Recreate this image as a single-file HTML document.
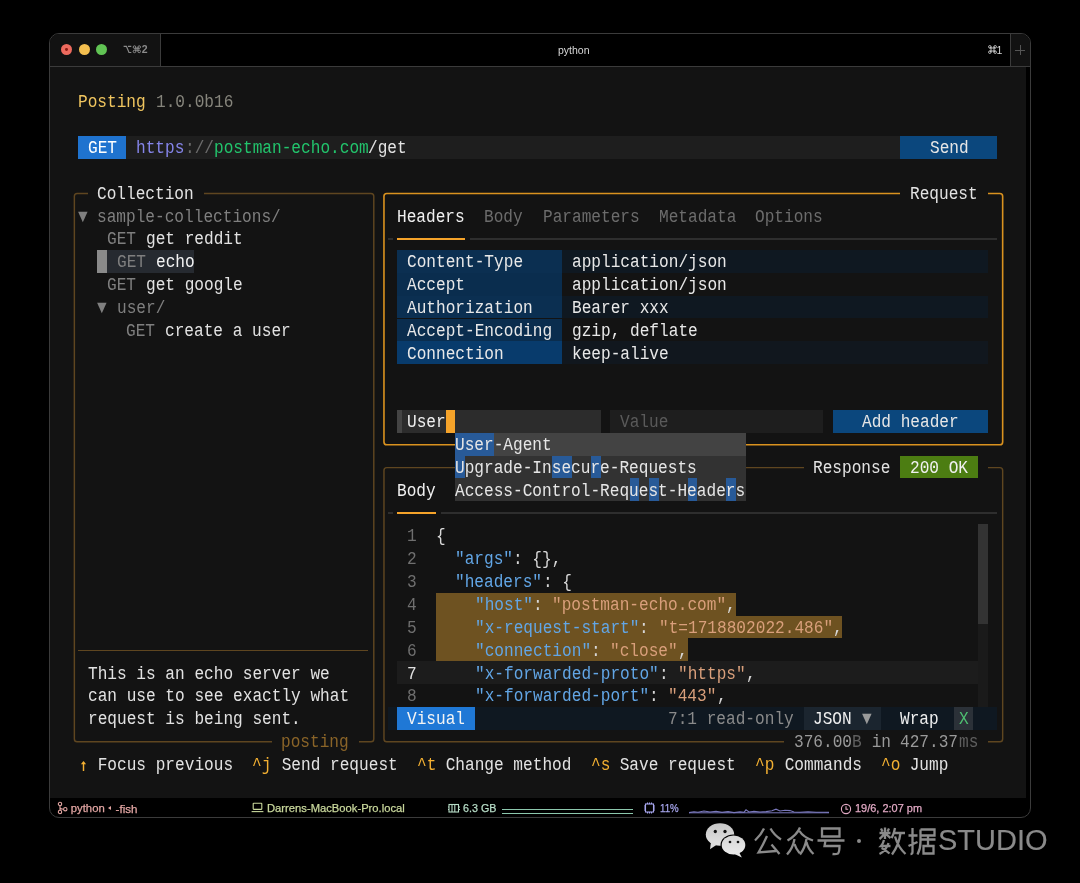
<!DOCTYPE html><html><head><meta charset="utf-8"><style>
html,body{margin:0;padding:0;background:#000;width:1080px;height:883px;overflow:hidden;position:relative}
.t{position:absolute;font-family:"Liberation Mono",monospace;font-size:18.600px;line-height:22.85px;height:22.85px;white-space:pre;transform:scaleX(0.8668);transform-origin:0 0;}
.s{position:absolute;font-family:"Liberation Sans",sans-serif;white-space:pre;}
</style></head><body><div id="root" style="position:absolute;left:0;top:0;width:1080px;height:883px;overflow:hidden;will-change:transform">
<div style="position:absolute;left:49px;top:33px;width:980px;height:783px;border:1px solid #3b3b3b;border-radius:10px;background:#000;overflow:hidden">
</div>
<div style="position:absolute;left:50.00px;top:34.00px;width:110.00px;height:32.00px;background:#121212;border-top-left-radius:9px;"></div>
<div style="position:absolute;left:160.00px;top:34.00px;width:1.00px;height:32.00px;background:#3b3b3b;"></div>
<div style="position:absolute;left:50.00px;top:66.00px;width:980.00px;height:1.00px;background:#3b3b3b;"></div>
<div style="position:absolute;left:1010.00px;top:34.00px;width:1.00px;height:32.00px;background:#3b3b3b;"></div>
<div style="position:absolute;left:1011.00px;top:34.00px;width:19.00px;height:32.00px;background:#121212;border-top-right-radius:9px;"></div>
<div style="position:absolute;left:1015.00px;top:49.50px;width:10.00px;height:1.00px;background:#555;"></div>
<div style="position:absolute;left:1019.50px;top:45.00px;width:1.00px;height:10.00px;background:#555;"></div>
<div style="position:absolute;left:61px;top:44.2px;width:11px;height:11px;border-radius:50%;background:#ed6a5e"></div>
<div style="position:absolute;left:65.1px;top:48.3px;width:2.8px;height:2.8px;border-radius:50%;background:#8c1a12"></div>
<div style="position:absolute;left:78.6px;top:44.2px;width:11px;height:11px;border-radius:50%;background:#f4bf4f"></div>
<div style="position:absolute;left:96.2px;top:44.2px;width:11px;height:11px;border-radius:50%;background:#61c454"></div>
<svg style="position:absolute;left:123px;top:45px" width="26" height="10" viewBox="0 0 26 10"><g fill="none" stroke="#8a8a8a" stroke-width="1.2"><path d="M0.6 1.3H3.4L6.0 7.5H8.3M5.0 1.3H8.3"/><path d="M12.9 2.2V6.3M14.9 2.2V6.3M11.6 3.3H16.2M11.6 5.2H16.2" stroke-width="1.0"/><circle cx="11.5" cy="2.1" r="1.3" stroke-width="1.0"/><circle cx="16.2" cy="2.1" r="1.3" stroke-width="1.0"/><circle cx="11.5" cy="6.4" r="1.3" stroke-width="1.0"/><circle cx="16.2" cy="6.4" r="1.3" stroke-width="1.0"/></g></svg>
<div class="s" style="left:141.8px;top:43.2px;font-size:10.5px;color:#8a8a8a;font-weight:bold">2</div>
<div class="s" style="left:558px;top:43.5px;font-size:10.5px;color:#d8d8d8;">python</div>
<svg style="position:absolute;left:987.5px;top:45px" width="9" height="9" viewBox="0 0 9 9"><g fill="none" stroke="#d8d8d8" stroke-width="0.85"><path d="M3 1.6V7.4M6 1.6V7.4M1.6 3H7.4M1.6 6H7.4"/><circle cx="1.8" cy="1.8" r="1.25"/><circle cx="7.2" cy="1.8" r="1.25"/><circle cx="1.8" cy="7.2" r="1.25"/><circle cx="7.2" cy="7.2" r="1.25"/></g></svg>
<div class="s" style="left:996.5px;top:43.5px;font-size:10.5px;color:#d8d8d8;">1</div>
<div style="position:absolute;left:50.00px;top:67.00px;width:976.00px;height:731.00px;background:#131313;"></div>
<div class="t" style="left:78.10px;top:92.30px;color:#f0c55f;">Posting</div>
<div class="t" style="left:145.82px;top:92.30px;color:#e2e2e2;"> </div>
<div class="t" style="left:155.50px;top:92.30px;color:#86857c;">1.0.0b16</div>
<div style="position:absolute;left:78.10px;top:135.70px;width:48.38px;height:22.85px;background:#1f73cf;"></div>
<div class="t" style="left:87.77px;top:138.00px;color:#ffffff;">GET</div>
<div style="position:absolute;left:126.47px;top:135.70px;width:774.00px;height:22.85px;background:#1e1e1e;"></div>
<div class="t" style="left:136.15px;top:138.00px;color:#8585ea;">https</div>
<div class="t" style="left:184.53px;top:138.00px;color:#6c6c6c;">://</div>
<div class="t" style="left:213.55px;top:138.00px;color:#22c46c;">postman-echo.com</div>
<div class="t" style="left:368.35px;top:138.00px;color:#e2e2e2;">/get</div>
<div style="position:absolute;left:900.48px;top:135.70px;width:96.75px;height:22.85px;background:#0b477d;"></div>
<div class="t" style="left:929.50px;top:138.00px;color:#e6e6e6;">Send</div>
<svg style="position:absolute;left:0;top:0" width="1080" height="883"><rect x="74.36" y="193.43" width="299.43" height="548.40" rx="2.8" fill="none" stroke="#5f4620" stroke-width="1.45"/></svg>
<div style="position:absolute;left:87.77px;top:181.40px;width:116.10px;height:22.85px;background:#131313;"></div>
<div class="t" style="left:97.45px;top:183.70px;color:#e2e2e2;">Collection</div>
<div class="t" style="left:78.10px;top:206.55px;color:#7f7f7f;">▼</div>
<div class="t" style="left:87.77px;top:206.55px;color:#7f7f7f;"> </div>
<div class="t" style="left:97.45px;top:206.55px;color:#7f7f7f;">sample-collections/</div>
<div class="t" style="left:107.12px;top:229.40px;color:#7f7f7f;">GET</div>
<div class="t" style="left:136.15px;top:229.40px;color:#7f7f7f;"> </div>
<div class="t" style="left:145.82px;top:229.40px;color:#e2e2e2;">get reddit</div>
<div style="position:absolute;left:97.45px;top:249.95px;width:9.68px;height:22.85px;background:#8a8a8a;"></div>
<div style="position:absolute;left:107.12px;top:249.95px;width:87.08px;height:22.85px;background:#262a30;"></div>
<div class="t" style="left:116.80px;top:252.25px;color:#7f7f7f;">GET</div>
<div class="t" style="left:145.82px;top:252.25px;color:#7f7f7f;"> </div>
<div class="t" style="left:155.50px;top:252.25px;color:#f4f4f4;">echo</div>
<div class="t" style="left:107.12px;top:275.10px;color:#7f7f7f;">GET</div>
<div class="t" style="left:136.15px;top:275.10px;color:#7f7f7f;"> </div>
<div class="t" style="left:145.82px;top:275.10px;color:#e2e2e2;">get google</div>
<div class="t" style="left:97.45px;top:297.95px;color:#7f7f7f;">▼</div>
<div class="t" style="left:107.12px;top:297.95px;color:#7f7f7f;"> </div>
<div class="t" style="left:116.80px;top:297.95px;color:#7f7f7f;">user/</div>
<div class="t" style="left:126.47px;top:320.80px;color:#7f7f7f;">GET</div>
<div class="t" style="left:155.50px;top:320.80px;color:#7f7f7f;"> </div>
<div class="t" style="left:165.18px;top:320.80px;color:#e2e2e2;">create a user</div>
<div style="position:absolute;left:78.10px;top:649.98px;width:290.25px;height:1.50px;background:#5f4620;"></div>
<div class="t" style="left:87.77px;top:663.55px;color:#e2e2e2;">This is an echo server we</div>
<div class="t" style="left:87.77px;top:686.40px;color:#e2e2e2;">can use to see exactly what</div>
<div class="t" style="left:87.77px;top:709.25px;color:#e2e2e2;">request is being sent.</div>
<div style="position:absolute;left:271.60px;top:729.80px;width:87.08px;height:22.85px;background:#131313;"></div>
<div class="t" style="left:281.27px;top:732.10px;color:#8a6428;">posting</div>
<svg style="position:absolute;left:0;top:0" width="1080" height="883"><rect x="383.96" y="193.43" width="618.70" height="251.35" rx="2.8" fill="none" stroke="#da921f" stroke-width="1.6"/></svg>
<div style="position:absolute;left:900.48px;top:181.40px;width:87.08px;height:22.85px;background:#131313;"></div>
<div class="t" style="left:910.15px;top:183.70px;color:#e2e2e2;">Request</div>
<div class="t" style="left:397.38px;top:206.55px;color:#f0f0f0;">Headers</div>
<div class="t" style="left:484.45px;top:206.55px;color:#6c6c6c;">Body</div>
<div class="t" style="left:542.50px;top:206.55px;color:#6c6c6c;">Parameters</div>
<div class="t" style="left:658.60px;top:206.55px;color:#6c6c6c;">Metadata</div>
<div class="t" style="left:755.35px;top:206.55px;color:#6c6c6c;">Options</div>
<div style="position:absolute;left:387.70px;top:238.23px;width:4.84px;height:1.80px;background:#2e2e2e;"></div>
<div style="position:absolute;left:397.38px;top:238.03px;width:67.73px;height:2.20px;background:#f5a32a;"></div>
<div style="position:absolute;left:469.94px;top:238.23px;width:527.29px;height:1.80px;background:#2e2e2e;"></div>
<div style="position:absolute;left:397.38px;top:249.95px;width:164.48px;height:22.85px;background:#0b2f51;"></div>
<div style="position:absolute;left:561.85px;top:249.95px;width:425.70px;height:22.85px;background:#0f1821;"></div>
<div class="t" style="left:407.05px;top:252.25px;color:#e8e8e8;">Content-Type</div>
<div class="t" style="left:571.52px;top:252.25px;color:#e8e8e8;">application/json</div>
<div style="position:absolute;left:397.38px;top:272.80px;width:164.48px;height:22.85px;background:#0a2d4e;"></div>
<div style="position:absolute;left:561.85px;top:272.80px;width:425.70px;height:22.85px;background:#131313;"></div>
<div class="t" style="left:407.05px;top:275.10px;color:#e8e8e8;">Accept</div>
<div class="t" style="left:571.52px;top:275.10px;color:#e8e8e8;">application/json</div>
<div style="position:absolute;left:397.38px;top:295.65px;width:164.48px;height:22.85px;background:#0b2f51;"></div>
<div style="position:absolute;left:561.85px;top:295.65px;width:425.70px;height:22.85px;background:#0f1821;"></div>
<div class="t" style="left:407.05px;top:297.95px;color:#e8e8e8;">Authorization</div>
<div class="t" style="left:571.52px;top:297.95px;color:#e8e8e8;">Bearer xxx</div>
<div style="position:absolute;left:397.38px;top:318.50px;width:164.48px;height:22.85px;background:#0a2d4e;"></div>
<div style="position:absolute;left:561.85px;top:318.50px;width:425.70px;height:22.85px;background:#131313;"></div>
<div class="t" style="left:407.05px;top:320.80px;color:#e8e8e8;">Accept-Encoding</div>
<div class="t" style="left:571.52px;top:320.80px;color:#e8e8e8;">gzip, deflate</div>
<div style="position:absolute;left:397.38px;top:341.35px;width:164.48px;height:22.85px;background:#083b6c;"></div>
<div style="position:absolute;left:561.85px;top:341.35px;width:425.70px;height:22.85px;background:#11171e;"></div>
<div class="t" style="left:407.05px;top:343.65px;color:#e8e8e8;">Connection</div>
<div class="t" style="left:571.52px;top:343.65px;color:#e8e8e8;">keep-alive</div>
<div style="position:absolute;left:397.38px;top:409.90px;width:203.18px;height:22.85px;background:#2c2c2c;"></div>
<div style="position:absolute;left:397.38px;top:409.90px;width:4.84px;height:22.85px;background:#444444;"></div>
<div class="t" style="left:407.05px;top:412.20px;color:#eeeeee;">User</div>
<div style="position:absolute;left:445.75px;top:409.90px;width:9.68px;height:22.85px;background:#f5a32a;"></div>
<div style="position:absolute;left:610.23px;top:409.90px;width:212.85px;height:22.85px;background:#1e1e1e;"></div>
<div class="t" style="left:619.90px;top:412.20px;color:#5a5a5a;">Value</div>
<div style="position:absolute;left:832.75px;top:409.90px;width:154.80px;height:22.85px;background:#0b477d;"></div>
<div class="t" style="left:861.78px;top:412.20px;color:#e6e6e6;">Add header</div>
<svg style="position:absolute;left:0;top:0" width="1080" height="883"><rect x="383.96" y="467.63" width="618.70" height="274.20" rx="2.8" fill="none" stroke="#5f4620" stroke-width="1.45"/></svg>
<div style="position:absolute;left:803.73px;top:455.60px;width:183.83px;height:22.85px;background:#131313;"></div>
<div class="t" style="left:813.40px;top:457.90px;color:#e2e2e2;">Response</div>
<div style="position:absolute;left:900.48px;top:455.60px;width:77.40px;height:22.85px;background:#4c7d12;"></div>
<div class="t" style="left:910.15px;top:457.90px;color:#f0f0f0;">200 OK</div>
<div class="t" style="left:397.38px;top:480.75px;color:#f0f0f0;">Body</div>
<div style="position:absolute;left:387.70px;top:512.43px;width:4.84px;height:1.80px;background:#2e2e2e;"></div>
<div style="position:absolute;left:397.38px;top:512.23px;width:38.70px;height:2.20px;background:#f5a32a;"></div>
<div style="position:absolute;left:440.91px;top:512.43px;width:556.31px;height:1.80px;background:#2e2e2e;"></div>
<div style="position:absolute;left:397.38px;top:661.25px;width:580.50px;height:22.85px;background:#1c1c1c;"></div>
<div style="position:absolute;left:436.08px;top:592.70px;width:299.93px;height:22.85px;background:#6e5221;"></div>
<div style="position:absolute;left:436.08px;top:615.55px;width:406.35px;height:22.85px;background:#6e5221;"></div>
<div style="position:absolute;left:436.08px;top:638.40px;width:251.55px;height:22.85px;background:#6e5221;"></div>
<div class="t" style="left:407.05px;top:526.45px;color:#6f6f6f;">1</div>
<div class="t" style="left:436.08px;top:526.45px;color:#d8d8d8;">{</div>
<div class="t" style="left:407.05px;top:549.30px;color:#6f6f6f;">2</div>
<div class="t" style="left:455.43px;top:549.30px;color:#62a6e6;">&quot;args&quot;</div>
<div class="t" style="left:513.48px;top:549.30px;color:#d8d8d8;">: {},</div>
<div class="t" style="left:407.05px;top:572.15px;color:#6f6f6f;">3</div>
<div class="t" style="left:455.43px;top:572.15px;color:#62a6e6;">&quot;headers&quot;</div>
<div class="t" style="left:542.50px;top:572.15px;color:#d8d8d8;">: {</div>
<div class="t" style="left:407.05px;top:595.00px;color:#6f6f6f;">4</div>
<div class="t" style="left:474.77px;top:595.00px;color:#62a6e6;">&quot;host&quot;</div>
<div class="t" style="left:532.83px;top:595.00px;color:#d8d8d8;">: </div>
<div class="t" style="left:552.18px;top:595.00px;color:#d99f7b;">&quot;postman-echo.com&quot;</div>
<div class="t" style="left:726.33px;top:595.00px;color:#d8d8d8;">,</div>
<div class="t" style="left:407.05px;top:617.85px;color:#6f6f6f;">5</div>
<div class="t" style="left:474.77px;top:617.85px;color:#62a6e6;">&quot;x-request-start&quot;</div>
<div class="t" style="left:639.25px;top:617.85px;color:#d8d8d8;">: </div>
<div class="t" style="left:658.60px;top:617.85px;color:#d99f7b;">&quot;t=1718802022.486&quot;</div>
<div class="t" style="left:832.75px;top:617.85px;color:#d8d8d8;">,</div>
<div class="t" style="left:407.05px;top:640.70px;color:#6f6f6f;">6</div>
<div class="t" style="left:474.77px;top:640.70px;color:#62a6e6;">&quot;connection&quot;</div>
<div class="t" style="left:590.88px;top:640.70px;color:#d8d8d8;">: </div>
<div class="t" style="left:610.23px;top:640.70px;color:#d99f7b;">&quot;close&quot;</div>
<div class="t" style="left:677.95px;top:640.70px;color:#d8d8d8;">,</div>
<div class="t" style="left:407.05px;top:663.55px;color:#e0e0e0;">7</div>
<div class="t" style="left:474.77px;top:663.55px;color:#62a6e6;">&quot;x-forwarded-proto&quot;</div>
<div class="t" style="left:658.60px;top:663.55px;color:#d8d8d8;">: </div>
<div class="t" style="left:677.95px;top:663.55px;color:#d99f7b;">&quot;https&quot;</div>
<div class="t" style="left:745.68px;top:663.55px;color:#d8d8d8;">,</div>
<div class="t" style="left:407.05px;top:686.40px;color:#6f6f6f;">8</div>
<div class="t" style="left:474.77px;top:686.40px;color:#62a6e6;">&quot;x-forwarded-port&quot;</div>
<div class="t" style="left:648.93px;top:686.40px;color:#d8d8d8;">: </div>
<div class="t" style="left:668.28px;top:686.40px;color:#d99f7b;">&quot;443&quot;</div>
<div class="t" style="left:716.65px;top:686.40px;color:#d8d8d8;">,</div>
<div style="position:absolute;left:977.88px;top:524.15px;width:9.68px;height:182.80px;background:#1a1a1a;"></div>
<div style="position:absolute;left:977.88px;top:524.15px;width:9.68px;height:100.00px;background:#333333;"></div>
<div style="position:absolute;left:387.70px;top:706.95px;width:609.53px;height:22.85px;background:#0f1821;"></div>
<div style="position:absolute;left:397.38px;top:706.95px;width:77.40px;height:22.85px;background:#1f78d6;"></div>
<div class="t" style="left:407.05px;top:709.25px;color:#f4f4f4;">Visual</div>
<div class="t" style="left:668.28px;top:709.25px;color:#8a8a8a;">7:1 read-only</div>
<div style="position:absolute;left:803.73px;top:706.95px;width:77.40px;height:22.85px;background:#1b252f;"></div>
<div class="t" style="left:813.40px;top:709.25px;color:#eeeeee;">JSON</div>
<div class="t" style="left:861.78px;top:709.25px;color:#9a9a9a;">▼</div>
<div class="t" style="left:900.48px;top:709.25px;color:#eeeeee;">Wrap</div>
<div style="position:absolute;left:953.69px;top:706.95px;width:19.35px;height:22.85px;background:#2b3138;"></div>
<div class="t" style="left:958.53px;top:709.25px;color:#4ebf71;">X</div>
<div style="position:absolute;left:784.38px;top:729.80px;width:203.18px;height:22.85px;background:#131313;"></div>
<div class="t" style="left:794.05px;top:732.10px;color:#9a9a9a;">376.00</div>
<div class="t" style="left:852.10px;top:732.10px;color:#5f5f5f;">B</div>
<div class="t" style="left:861.78px;top:732.10px;color:#9a9a9a;"> in </div>
<div class="t" style="left:900.48px;top:732.10px;color:#9a9a9a;">427.37</div>
<div class="t" style="left:958.53px;top:732.10px;color:#5f5f5f;">ms</div>
<div style="position:absolute;left:455.43px;top:432.75px;width:290.25px;height:22.85px;background:#434343;"></div>
<div style="position:absolute;left:455.43px;top:455.60px;width:290.25px;height:45.70px;background:#323232;"></div>
<div style="position:absolute;left:455.43px;top:432.75px;width:9.68px;height:22.85px;background:#285a98;"></div>
<div style="position:absolute;left:465.10px;top:432.75px;width:9.68px;height:22.85px;background:#285a98;"></div>
<div style="position:absolute;left:474.77px;top:432.75px;width:9.68px;height:22.85px;background:#285a98;"></div>
<div style="position:absolute;left:484.45px;top:432.75px;width:9.68px;height:22.85px;background:#285a98;"></div>
<div class="t" style="left:455.43px;top:435.05px;color:#e6e6e6;">User-Agent</div>
<div style="position:absolute;left:455.43px;top:455.60px;width:9.68px;height:22.85px;background:#285a98;"></div>
<div style="position:absolute;left:552.18px;top:455.60px;width:9.68px;height:22.85px;background:#285a98;"></div>
<div style="position:absolute;left:561.85px;top:455.60px;width:9.68px;height:22.85px;background:#285a98;"></div>
<div style="position:absolute;left:590.88px;top:455.60px;width:9.68px;height:22.85px;background:#285a98;"></div>
<div class="t" style="left:455.43px;top:457.90px;color:#e6e6e6;">Upgrade-Insecure-Requests</div>
<div style="position:absolute;left:629.58px;top:478.45px;width:9.68px;height:22.85px;background:#285a98;"></div>
<div style="position:absolute;left:648.93px;top:478.45px;width:9.68px;height:22.85px;background:#285a98;"></div>
<div style="position:absolute;left:687.63px;top:478.45px;width:9.68px;height:22.85px;background:#285a98;"></div>
<div style="position:absolute;left:726.33px;top:478.45px;width:9.68px;height:22.85px;background:#285a98;"></div>
<div class="t" style="left:455.43px;top:480.75px;color:#e6e6e6;">Access-Control-Request-Headers</div>
<div class="t" style="left:87.77px;top:754.95px;color:#e2e2e2;"> Focus previous  </div>
<div class="t" style="left:252.25px;top:754.95px;color:#f3b032;">^j</div>
<div class="t" style="left:271.60px;top:754.95px;color:#e2e2e2;"> Send request  </div>
<div class="t" style="left:416.73px;top:754.95px;color:#f3b032;">^t</div>
<div class="t" style="left:436.08px;top:754.95px;color:#e2e2e2;"> Change method  </div>
<div class="t" style="left:590.88px;top:754.95px;color:#f3b032;">^s</div>
<div class="t" style="left:610.23px;top:754.95px;color:#e2e2e2;"> Save request  </div>
<div class="t" style="left:755.35px;top:754.95px;color:#f3b032;">^p</div>
<div class="t" style="left:774.70px;top:754.95px;color:#e2e2e2;"> Commands  </div>
<div class="t" style="left:881.13px;top:754.95px;color:#f3b032;">^o</div>
<div class="t" style="left:900.48px;top:754.95px;color:#e2e2e2;"> Jump</div>
<svg style="position:absolute;left:78px;top:758px" width="12" height="14" viewBox="0 0 12 14"><path d="M5.5 4.5V13" stroke="#f3b032" stroke-width="1.45"/><path d="M2.9 6.3L5.5 2.9L8.1 6.3Z" fill="#f3b032"/></svg>
<div class="s" style="left:70.8px;top:802.0px;font-size:11.3px;color:#e3a6a3;transform:scaleX(1.0);transform-origin:0 0;-webkit-text-stroke:0.25px #e3a6a3">python</div>
<div style="position:absolute;left:108.4px;top:805.9px;width:0;height:0;border-top:2.2px solid transparent;border-bottom:2.2px solid transparent;border-right:3.8px solid #e3a6a3"></div>
<div class="s" style="left:115.6px;top:802.0px;font-size:11.6px;color:#e3a6a3;transform:scaleX(1.0);transform-origin:0 0;-webkit-text-stroke:0.25px #e3a6a3">-fish</div>
<svg style="position:absolute;left:57px;top:801px" width="11" height="14" viewBox="0 0 11 14"><g fill="none" stroke="#e3a6a3" stroke-width="1.1"><circle cx="3" cy="3" r="1.7"/><circle cx="3" cy="11" r="1.7"/><circle cx="8.3" cy="8.2" r="1.7"/><path d="M3 4.7V9.3M3 6.5Q3 8.2 6.6 8.2"/></g></svg>
<div class="s" style="left:267.2px;top:802.0px;font-size:11.3px;color:#c9d89c;transform:scaleX(0.993);transform-origin:0 0;-webkit-text-stroke:0.25px #c9d89c">Darrens-MacBook-Pro.local</div>
<svg style="position:absolute;left:251px;top:802px" width="13" height="11" viewBox="0 0 13 11"><g fill="none" stroke="#c9d89c" stroke-width="1.1"><rect x="2.2" y="1.2" width="8.6" height="6.2" rx="0.6"/><path d="M0.6 9.6H12.4"/></g></svg>
<div class="s" style="left:463.0px;top:802.0px;font-size:11.3px;color:#b6dcc6;transform:scaleX(0.95);transform-origin:0 0;-webkit-text-stroke:0.25px #b6dcc6">6.3 GB</div>
<svg style="position:absolute;left:448px;top:802.5px" width="12" height="11" viewBox="0 0 12 11"><g fill="none" stroke="#b6dcc6" stroke-width="1.1"><rect x="1" y="1.5" width="9.5" height="7.5"/><path d="M4 1.5V9M6.8 1.5V9M1 4H0M1 6.5H0M10.5 4H12M10.5 6.5H12"/></g></svg>
<div style="position:absolute;left:502.00px;top:808.80px;width:131.00px;height:1.10px;background:#8cc7ad;"></div>
<div style="position:absolute;left:502.00px;top:813.10px;width:131.00px;height:1.10px;background:#8cc7ad;"></div>
<div class="s" style="left:659.5px;top:802.0px;font-size:11.3px;color:#a7a6ee;transform:scaleX(0.86);transform-origin:0 0;-webkit-text-stroke:0.25px #a7a6ee">11%</div>
<svg style="position:absolute;left:643px;top:802px" width="13" height="12" viewBox="0 0 13 12"><g fill="none" stroke="#a7a6ee" stroke-width="1.1"><rect x="2.5" y="2" width="8" height="8"/><path d="M4.5 0.5V2M6.5 0.5V2M8.5 0.5V2M4.5 10V11.5M6.5 10V11.5M8.5 10V11.5M1 4H2.5M1 6H2.5M1 8H2.5M10.5 4H12M10.5 6H12M10.5 8H12"/></g></svg>
<svg style="position:absolute;left:688px;top:806px" width="143" height="9" viewBox="0 0 143 9"><path d="M1 6.6L6 5.8L10 6.2L16 5L22 6L28 5.2L34 6.4L40 5.6L46 6.6L52 5.9L56 6.3L58 3.8L61 6L66 5.2L72 6L78 5.6L84 4.8L88 3.2L92 5L97 4.2L102 4.6L106 6L112 6.2L120 5.8L128 6.3L136 6.2L141 6.4" fill="none" stroke="#7a78bc" stroke-width="1.1"/><path d="M1 6.8H141" stroke="#7a78bc" stroke-width="1"/></svg>
<div class="s" style="left:855.2px;top:802.0px;font-size:11.3px;color:#e2a9c4;transform:scaleX(0.97);transform-origin:0 0;-webkit-text-stroke:0.25px #e2a9c4">19/6, 2:07 pm</div>
<svg style="position:absolute;left:840px;top:802.5px" width="12" height="12" viewBox="0 0 12 12"><g fill="none" stroke="#e2a9c4" stroke-width="1.1"><circle cx="6" cy="6" r="4.6"/><path d="M6 3.2V6.2H8.2"/></g></svg>
<div class="s" style="left:937.6px;top:824.2px;font-size:29.2px;color:#8a8a8a;transform:scaleX(0.993);transform-origin:0 0;-webkit-text-stroke:0.15px #8a8a8a">STUDIO</div>
<svg style="position:absolute;left:754px;top:826.5px" width="30" height="30" viewBox="0 0 30 30"><path d="M10 1.5Q7 8 1 13.5M16.5 1.5Q20 8 27 12.5M13 9Q9 18 4.5 25.5L22 24M17.5 17.5L25.5 27" fill="none" stroke="#8a8a8a" stroke-width="2.3" stroke-linecap="butt" stroke-linejoin="miter"/></svg>
<svg style="position:absolute;left:785.5px;top:826.5px" width="30" height="30" viewBox="0 0 30 30"><path d="M14 0.5Q11 8 1.5 13.5M13.5 4Q17 10 27 13.5M8.5 12Q7 21 1 27.5M8.5 17Q10 22 13.5 26M20.5 12Q19 21 14 27.5M20.5 15Q22 22 27.5 27" fill="none" stroke="#8a8a8a" stroke-width="2.3" stroke-linecap="butt" stroke-linejoin="miter"/></svg>
<svg style="position:absolute;left:816.5px;top:826.5px" width="30" height="30" viewBox="0 0 30 30"><path d="M5 1.5H22.5V9.5H5ZM0.5 13.5H27.5M8.5 13.5L7.5 19H22.5Q22.5 25 21 26.5Q19 27.5 15.5 27" fill="none" stroke="#8a8a8a" stroke-width="2.3" stroke-linecap="butt" stroke-linejoin="miter"/></svg>
<div style="position:absolute;left:857px;top:839px;width:4.2px;height:4.2px;border-radius:50%;background:#8a8a8a"></div>
<svg style="position:absolute;left:877.5px;top:826.5px" width="30" height="30" viewBox="0 0 30 30"><path d="M7 0.5V12M1.5 6H12.5M3 1.5L4.5 4.5M11 1.5L9.5 4.5M7 6Q4 10 1.5 12M7 6Q10 9 12.5 11M6 13Q5 17 3 19H12.5M10.5 16Q8 24 1.5 27M3.5 21Q8 23 11.5 26.5M17 1Q15.5 8 13.5 11M15.5 6H27M22.5 6Q21 18 14 27.5M17 9.5Q20 20 27.5 27" fill="none" stroke="#8a8a8a" stroke-width="2.3" stroke-linecap="butt" stroke-linejoin="miter"/></svg>
<svg style="position:absolute;left:907.5px;top:826.5px" width="30" height="30" viewBox="0 0 30 30"><path d="M4.5 1V25Q4.5 27 2.5 27M0.5 8.5H9.5M0.5 19L9.5 15M12.5 2.5H26.5V8.5H12.5M12.5 2.5V15Q12.5 22 9.5 27.5M13 12.5H27.5M20 8.5V19M15.5 19H25.5V26.5H15.5Z" fill="none" stroke="#8a8a8a" stroke-width="2.3" stroke-linecap="butt" stroke-linejoin="miter"/></svg>
<svg style="position:absolute;left:704px;top:822.4px" width="44" height="37" viewBox="0 0 44 37"><defs><linearGradient id="g1" x1="0" y1="0" x2="0" y2="1"><stop offset="0" stop-color="#c6c6c6"/><stop offset="1" stop-color="#e2e2e2"/></linearGradient><linearGradient id="g2" x1="0" y1="0" x2="0" y2="1"><stop offset="0" stop-color="#d6d6d6"/><stop offset="1" stop-color="#ebebeb"/></linearGradient></defs><ellipse cx="16" cy="12.5" rx="14.2" ry="11.3" fill="url(#g1)"/><path d="M7 20L6 27.2L13 22.5Z" fill="#dcdcdc"/><ellipse cx="29.5" cy="23" rx="13" ry="10.5" fill="#000"/><ellipse cx="29.5" cy="23" rx="11.8" ry="9.6" fill="url(#g2)"/><path d="M35 30L37.8 35.6L30.5 32Z" fill="#e6e6e6"/><circle cx="11.3" cy="9.5" r="1.65" fill="#111"/><circle cx="21" cy="9.5" r="1.65" fill="#111"/><circle cx="26" cy="20" r="1.35" fill="#111"/><circle cx="34" cy="20" r="1.35" fill="#111"/></svg>
</div></body></html>
